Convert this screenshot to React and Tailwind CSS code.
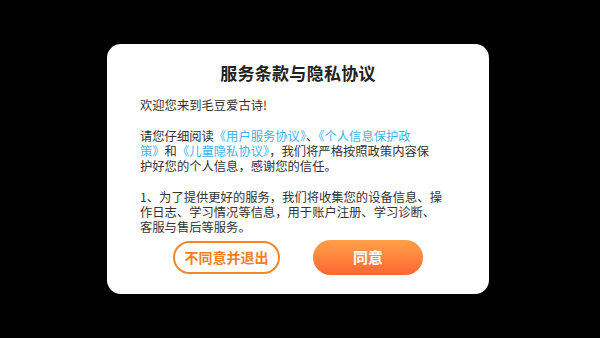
export default function App() {
  const font = { fontFamily: '"Noto Sans CJK SC", "Noto Sans", sans-serif' };
  return (
    <div className="w-[600px] h-[338px] bg-black flex items-center justify-center" style={font}>
      <div className="w-[382px] h-[250px] bg-white rounded-[14px] flex flex-col pt-[19px] translate-x-[-2px]">
        <div className="text-[17px] leading-[20px] font-bold text-[#222] text-center tracking-[0.3px]">
          服务条款与隐私协议
        </div>
        <div className="px-[33px] mt-[15px] text-[12.3px] leading-[15px] text-[#333] whitespace-nowrap">
          <p>欢迎您来到毛豆爱古诗!</p>
          <p className="mt-[16px]">
            请您仔细阅读<span className="text-[#3fb4ee]">《用户服务协议》</span>、<span className="text-[#3fb4ee]">《个人信息保护政</span>
            <br />
            <span className="text-[#3fb4ee]">策》</span>和<span className="text-[#3fb4ee]">《儿童隐私协议》</span>，我们将严格按照政策内容保
            <br />
            护好您的个人信息，感谢您的信任。
          </p>
          <p className="mt-[16px]">
            1、为了提供更好的服务，我们将收集您的设备信息、操
            <br />
            作日志、学习情况等信息，用于账户注册、学习诊断、
            <br />
            客服与售后等服务。
          </p>
        </div>
        <div className="flex justify-center items-center gap-[33px] mt-[5px]">
          <button className="w-[107px] h-[33px] rounded-full border-2 border-[#f5862a] text-[#f0801f] text-[14px] font-bold flex items-center justify-center">
            不同意并退出
          </button>
          <button className="w-[110px] h-[35px] rounded-full bg-gradient-to-b from-[#ffa04a] to-[#ff6432] text-white text-[15px] font-bold flex items-center justify-center">
            同意
          </button>
        </div>
      </div>
    </div>
  );
}
